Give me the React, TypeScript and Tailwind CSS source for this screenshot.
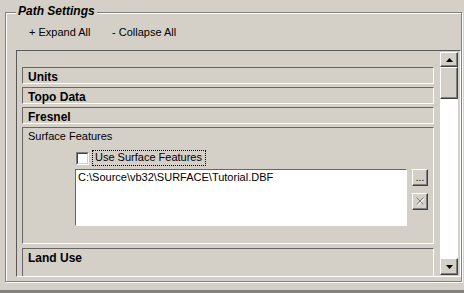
const raised =
  "border border-t-white border-l-white border-r-[#404040] border-b-[#404040] shadow-[inset_-1px_-1px_0_#808080] bg-[#d4d0c8]";
const sunken = "border border-t-[#666666] border-l-[#666666] border-r-white border-b-white";

function Arrow({ up }: { up?: boolean }) {
  return (
    <svg width="7" height="4" viewBox="0 0 7 4">
      <path d={up ? "M3.5 0 L7 4 L0 4 Z" : "M0 0 L7 0 L3.5 4 Z"} fill="#000" />
    </svg>
  );
}

function SectionHeader({ title, className = "" }: { title: string; className?: string }) {
  return (
    <div className={`${sunken} h-[17px] pl-[5px] pt-[2px] text-[12px] leading-[14px] font-bold ${className}`}>
      {title}
    </div>
  );
}

function Scrollbar() {
  return (
    <div className="w-[18px] flex flex-col py-[1px]">
      <div className={`${raised} h-[15px] flex items-center justify-center`}>
        <Arrow up />
      </div>
      <div className={`${raised} h-[32px]`} />
      <div className="flex-1 bg-white" />
      <div className={`${raised} h-[17px] flex items-center justify-center`}>
        <Arrow />
      </div>
    </div>
  );
}

export default function App() {
  return (
    <div className="w-[464px] h-[293px] bg-[#d4d0c8] overflow-hidden text-black font-['Liberation_Sans',Arial,sans-serif]">
      {/* Path Settings group */}
      <div className="relative mt-[12px] ml-[5px] w-[457px] h-[270px] border border-[#808080] shadow-[inset_1px_1px_0_#fff,1px_1px_0_#fff]">
        <div className="absolute left-[10px] -top-[9px] px-[2px] bg-[#d4d0c8] text-[12px] leading-[14px] font-bold italic">
          Path Settings
        </div>

        <div className="flex mt-[13px] ml-[23px] text-[11px] leading-[13px]">
          <span className="w-[83px]">+ Expand All</span>
          <span>- Collapse All</span>
        </div>

        {/* scrolling panel */}
        <div className="flex mt-[11px] ml-[10px] w-[445px] h-[227px] border border-t-[#5a5a5a] border-l-[#5a5a5a] border-r-white border-b-white pr-[2px]">
          <div className="w-[423px] overflow-hidden pt-[16px] pl-[5px]">
            <div className="w-[412px] flex flex-col">
              <SectionHeader title="Units" className="mb-[3px]" />
              <SectionHeader title="Topo Data" className="mb-[3px]" />
              <SectionHeader title="Fresnel" className="mb-[3px]" />

              <div className={`${sunken} h-[117px] pt-[2px]`}>
                <div className="pl-[5px] text-[11px] leading-[13px]">Surface Features</div>
                <div className="flex items-center mt-[7px] ml-[53px] h-[16px]">
                  <div className="w-[13px] h-[13px] border border-t-[#808080] border-l-[#808080] border-r-white border-b-white">
                    <div className="w-full h-full bg-white border border-t-[#404040] border-l-[#404040] border-r-[#d4d0c8] border-b-[#d4d0c8]" />
                  </div>
                  <div className="ml-[3px] h-[16px] border border-dotted border-black pl-[2px] pr-[3px] text-[11px] leading-[13px]">
                    Use Surface Features
                  </div>
                </div>
                <div className="flex mt-[3px] ml-[52px]">
                  <div className={`${sunken} w-[332px] h-[57px] bg-white pl-[2px] pt-[1px] text-[11px] leading-[13px]`}>
                    C:\Source\vb32\SURFACE\Tutorial.DBF
                  </div>
                  <div className="flex flex-col gap-[7px] ml-[5px]">
                    <div className={`${raised} w-[16px] h-[17px] flex items-center justify-center text-[10px] leading-[10px]`}>
                      ...
                    </div>
                    <div className={`${raised} w-[16px] h-[17px] flex items-center justify-center`}>
                      <svg width="9" height="9" viewBox="0 0 9 9">
                        <path d="M1.5 1.5 L8.5 8.5 M8.5 1.5 L1.5 8.5" stroke="#fff" strokeWidth="1" />
                        <path d="M0.5 0.5 L7.5 7.5 M7.5 0.5 L0.5 7.5" stroke="#808080" strokeWidth="1" />
                      </svg>
                    </div>
                  </div>
                </div>
              </div>

              <SectionHeader title="Land Use" className="mt-[4px] h-[40px]" />
            </div>
          </div>
          <Scrollbar />
        </div>
      </div>

      <div className="mt-[8px] h-[3px] bg-[#85827e]" />
    </div>
  );
}
